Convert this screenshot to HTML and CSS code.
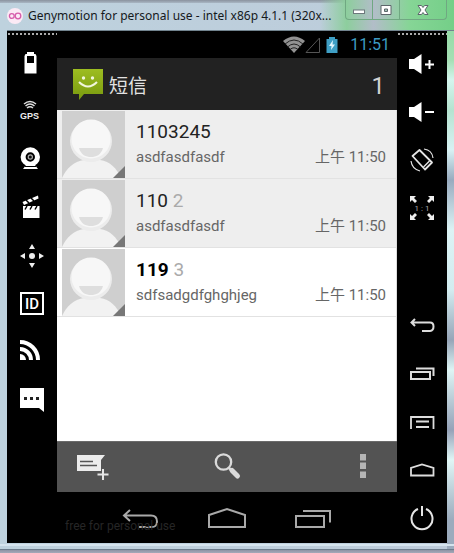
FILE: index.html
```html
<!DOCTYPE html>
<html lang="zh-CN">
<head>
<meta charset="utf-8">
<title>Genymotion for personal use</title>
<link rel="stylesheet" href="styles.css">
</head>
<body>
<svg class="defs" aria-hidden="true">
  <defs>
    <linearGradient id="leaf" x1="0" y1="0" x2="0" y2="1"><stop offset="0" stop-color="#9dbd21"/><stop offset="1" stop-color="#78990f"/></linearGradient>
    <symbol id="avatar" viewBox="0 0 63 67" preserveAspectRatio="none">
      <rect width="63" height="67" fill="#cfcfcf"/>
      <path d="M0 67C4 58 12 50 22 49H38C48 50 55 58 59 67Z" fill="#f2f2f2"/>
      <circle cx="29" cy="30" r="21" fill="#ececec"/>
      <circle cx="29" cy="28" r="19.500" fill="#f7f7f7"/>
      <path d="M17 37H41C39 44 34 46 29 46S19 44 17 37Z" fill="#dedede"/>
      <path d="M63 55V67H51Z" fill="#777"/>
    </symbol>
  </defs>
</svg>
<div class="window">
  <header class="titlebar">
    <svg class="app-icon" viewBox="0 0 16 16" aria-hidden="true"><circle cx="8" cy="8" r="8" fill="#fbeaf5"/><g fill="none" stroke="#d65cab" stroke-width="1.300"><circle cx="4.800" cy="8" r="2.400"/><circle cx="11" cy="8" r="2.800"/></g></svg>
    <h1>Genymotion for personal use - intel x86p 4.1.1 (320x...</h1>
    <div class="controls">
      <button aria-label="Minimize"><svg viewBox="0 0 14 12"><rect x="1.500" y="6" width="11" height="3.500" fill="#fff" stroke="#6d777c"/></svg></button>
      <button aria-label="Maximize"><svg viewBox="0 0 14 12"><path d="M2 1.500H12V10.500H2ZM5.500 5V7.500H8.500V5Z" fill="#fff" fill-rule="evenodd" stroke="#5d666b"/></svg></button>
      <button class="close" aria-label="Close"><svg viewBox="0 0 14 12"><path d="M2 1.500H5.500L7 3.500 8.500 1.500H12L9 6 12 10.500H8.500L7 8.500 5.500 10.500H2L5 6Z" fill="#fff" stroke="#5d666b"/></svg></button>
    </div>
  </header>
  <main class="emulator">
    <nav class="tools" aria-label="Sensors">
      <button aria-label="Battery"><svg viewBox="0 0 32 32"><path d="M11 5H18V7H19.500L20.500 9V26.500H8.500V9L9.500 7H11ZM11 9V16H18V9Z" fill="#fff" fill-rule="evenodd"/></svg></button>
      <button aria-label="GPS"><svg viewBox="0 0 32 32"><g fill="none" stroke="#ddd" stroke-width="1.500"><path d="M8 9Q14 4 20 9M9.500 11Q14 7 18.500 11M11 13Q14 10.500 17 13"/></g><text x="4" y="24" class="gps">GPS</text></svg></button>
      <button aria-label="Camera"><svg viewBox="0 0 32 32"><circle cx="14.300" cy="14" r="7.200" fill="none" stroke="#fff" stroke-width="5"/><circle cx="14.300" cy="14" r="2.700" fill="#aaa"/><circle cx="14.300" cy="14" r="1.500" fill="#111"/><path d="M10 22H19L22 26H7Z" fill="#fff"/><path d="M9 23.500H20" stroke="#000"/></svg></button>
      <button aria-label="Video"><svg viewBox="0 0 32 32"><path d="M7 15H23.500V27H7Z" fill="#fff"/><path d="M6.500 11L22 4.500 22.500 7.500 8 14Z" fill="#fff"/><path d="M10 9L13 12M15 7L18 10M11 15L9 18.500M16 15L14 18.500M21 15L19 18.500" stroke="#000" stroke-width="1.500"/></svg></button>
      <button aria-label="Move"><svg viewBox="0 0 32 32"><circle cx="16" cy="17" r="3" fill="#eee"/><path d="M16 5L19 10H13ZM16 29L19 24H13ZM4 17L9 14V20ZM28 17L23 14V20Z" fill="#eee"/></svg></button>
      <button aria-label="Identifiers"><svg viewBox="0 0 32 32"><rect x="5" y="6" width="22" height="21" fill="none" stroke="#fff" stroke-width="2"/><text x="16" y="22" class="ident">ID</text></svg></button>
      <button aria-label="Network"><svg viewBox="0 0 32 32"><g fill="none" stroke="#fff" stroke-width="4"><path d="M4 7A18 18 0 0 1 22 25M4 14A11 11 0 0 1 15 25"/></g><path d="M4 19A6 6 0 0 1 10 25H4Z" fill="#fff"/></svg></button>
      <button aria-label="Phone"><svg viewBox="0 0 32 32"><path d="M4 5H28V29L23 25H4Z" fill="#fff"/><path d="M8 14H11V17H8ZM14 14H17V17H14ZM20 14H23V17H20Z" fill="#222"/></svg></button>
    </nav>

    <section class="phone">
      <div class="status">
        <svg class="wifi" viewBox="0 0 22 18"><path d="M11 17L0 5Q11 -4 22 5Z" fill="#929292"/><path d="M2 8Q11 0 20 8M4.500 11Q11 5 17.500 11M7 13.500Q11 10 15 13.500" stroke="#222" fill="none"/></svg>
        <svg class="signal" viewBox="0 0 16 18"><path d="M1 16.500H14.500V2Z" fill="none" stroke="#555"/></svg>
        <svg class="charge" viewBox="0 0 12 18"><path d="M3 1H9V3H11.500V17H.5V3H3Z" fill="#3f9fc5"/><path d="M7 4L3 10H5.500L5 14 9 8.500H6.500Z" fill="#e2f7ff"/></svg>
        <time>11:51</time>
      </div>
      <header class="appbar">
        <svg viewBox="0 0 32 32" aria-hidden="true"><path d="M1 1H31V26H12L7 32V26H1Z" fill="url(#leaf)"/><circle cx="11.500" cy="10" r="1.700" fill="#f1f6dc"/><circle cx="20.500" cy="10" r="1.700" fill="#f1f6dc"/><path d="M7 14Q16 23 25 14" fill="none" stroke="#f1f6dc" stroke-width="2"/></svg>
        <h2>短信</h2>
        <span class="unread">1</span>
      </header>
      <ul class="threads">
        <li>
          <svg class="avatar" aria-hidden="true"><use href="#avatar"/></svg>
          <div class="body"><div class="name">1103245</div><div class="line"><span>asdfasdfasdf</span><time>上午 11:50</time></div></div>
        </li>
        <li>
          <svg class="avatar" aria-hidden="true"><use href="#avatar"/></svg>
          <div class="body"><div class="name">110 <span class="count">2</span></div><div class="line"><span>asdfasdfasdf</span><time>上午 11:50</time></div></div>
        </li>
        <li class="new">
          <svg class="avatar" aria-hidden="true"><use href="#avatar"/></svg>
          <div class="body"><div class="name">119 <span class="count">3</span></div><div class="line"><span>sdfsadgdfghghjeg</span><time>上午 11:50</time></div></div>
        </li>
      </ul>
      <div class="actions">
        <button aria-label="New message"><svg viewBox="0 0 32 32"><path d="M0 4H28L24 9V20H0Z" fill="#ececec"/><path d="M3 10.500H16M3 14.500H20" stroke="#555" stroke-width="1.600"/><path d="M26 17V30M19.500 23.500H32" stroke="#555" stroke-width="4"/><path d="M26 18V29M20.500 23.500H31.500" stroke="#e6e6e6" stroke-width="2"/></svg></button>
        <button aria-label="Search"><svg viewBox="0 0 32 32"><circle cx="12.500" cy="11" r="7.700" fill="none" stroke="#dadada" stroke-width="2.300"/><path d="M18 17L21 20" stroke="#dadada" stroke-width="2.500"/><path d="M21 19.500L26.500 25" stroke="#dadada" stroke-width="5" stroke-linecap="round"/></svg></button>
        <button aria-label="More"><svg viewBox="0 0 32 32"><path d="M15 3H21V9.500H15ZM15 11.500H21V18H15ZM15 20.500H21V27H15Z" fill="#b5b5b5"/></svg></button>
      </div>
      <div class="navkeys">
        <button aria-label="Back"><svg viewBox="0 0 40 24"><path d="M9 4L3 9.500 9 15M3 9.500H30Q36 9.500 36 15.500T30 21H18" fill="none" stroke="#a9a9a9" stroke-width="2"/></svg></button>
        <button aria-label="Home"><svg viewBox="0 0 40 24"><path d="M2 21V9L20 3 38 9V21Z" fill="none" stroke="#a9a9a9" stroke-width="2"/></svg></button>
        <button aria-label="Recent apps"><svg viewBox="0 0 40 24"><path d="M3 10H31V21H3ZM10 5H37V16.500" fill="none" stroke="#a9a9a9" stroke-width="2"/></svg></button>
        <span class="watermark">free for personal use</span>
      </div>
    </section>

    <nav class="tools" aria-label="Device">
      <button aria-label="Volume up"><svg viewBox="0 0 32 32"><path d="M3 12H8L15.500 7V27L8 22H3Z" fill="#fff"/><path d="M19 17.500H28M23.500 13V22" stroke="#fff" stroke-width="2"/></svg></button>
      <button aria-label="Volume down"><svg viewBox="0 0 32 32"><path d="M3 12H8L15.500 7V27L8 22H3Z" fill="#fff"/><path d="M19 17H28" stroke="#fff" stroke-width="2"/></svg></button>
      <button aria-label="Rotate"><svg viewBox="0 0 32 32"><g fill="none" stroke="#e5e5e5"><path d="M6.500 13L13.500 7 26 19.500 19 26.500Z" stroke-width="1.800" stroke-linejoin="round"/><path d="M18 6Q26 7 27 15M14 28Q6 26 5 18" stroke-width="1.200"/><path d="M17.500 24L23.500 18" stroke-width="1.500"/></g></svg></button>
      <button aria-label="Pixel perfect"><svg viewBox="0 0 32 32"><path d="M4 5H10L8 7 11 10 9 12 6 9 4 11ZM28 5H22L24 7 21 10 23 12 26 9 28 11ZM4 29H10L8 27 11 24 9 22 6 25 4 23ZM28 29H22L24 27 21 24 23 22 26 25 28 23Z" fill="#eee"/><text x="16" y="20" class="ratio">1 : 1</text></svg></button>
      <button class="lower" aria-label="Back"><svg viewBox="0 0 32 32"><path d="M9 9L5.500 12.500 9 16M5.500 12.500H24Q27.500 12.500 27.500 16.500T24 21H16" fill="none" stroke="#ddd" stroke-width="2"/></svg></button>
      <button aria-label="Recent apps"><svg viewBox="0 0 32 32"><path d="M5 14H24V21H5ZM10 10.500H27.500V18" fill="none" stroke="#ddd" stroke-width="2"/></svg></button>
      <button aria-label="Menu"><svg viewBox="0 0 32 32"><path d="M5 23V11H27.500V23M10 15.500H23M10 21H23" fill="none" stroke="#ddd" stroke-width="1.800"/></svg></button>
      <button aria-label="Home"><svg viewBox="0 0 32 32"><path d="M5 21.500V14L16 10.500 27.500 14V21.500Z" fill="none" stroke="#ddd" stroke-width="1.800"/></svg></button>
      <button aria-label="Power"><svg viewBox="0 0 32 32"><path d="M12 7A10.500 10.500 0 1 0 20 7M16 4V14" fill="none" stroke="#e5e5e5" stroke-width="2"/></svg></button>
    </nav>
  </main>
</div>
</body>
</html>
```
FILE: styles.css
```css
* { box-sizing: border-box; }
body { margin: 0; font-family: Roboto, "Noto Sans CJK SC", sans-serif; background: #b6c6d6; }
button { border: 0; padding: 0; background: none; display: flex; align-items: center; justify-content: center; }
svg { display: block; flex: none; }
h1, h2, ul { margin: 0; padding: 0; font-weight: 400; }
.defs { width: 0; height: 0; position: absolute; }

.window {
  min-height: 100vh;
  display: flex;
  flex-direction: column;
  padding: 0 7px 10px;
  background:
    linear-gradient(#8a929e, #a9b7c4) top / 100% 3px no-repeat,
    linear-gradient(#d5e4ee, #d5e4ee) bottom 7px left / 100% 2px no-repeat,
    linear-gradient(#6c7c8c, #6c7c8c) bottom 3px left / 100% 1px no-repeat,
    linear-gradient(#8e93a4, #a4a9b9) bottom / 100% 3px no-repeat,
    linear-gradient(#86d89a 0, #a5dfb4 60px, #d4f5ee 80px, #b5e3d0 110px, #d8f2f4 150px, #98abbf 180px, #dcf3f5 230px, #d3ecf0 290px, #96a5b8 340px, #def5f5 370px, #95a2b8 430px, #e0f6f6 460px, #9babbd 520px) right / 7px 100% no-repeat,
    linear-gradient(90deg, #bed2de, #bccbda);
}
.titlebar {
  display: flex;
  align-items: flex-start;
  height: 31px;
  margin-right: -7px;
  padding-right: 7px;
  background: linear-gradient(90deg, transparent 70%, #8dce9d 76%, #b2bdc8 82%, #86d596 90%, #74cf88);
  border-bottom: 1px solid #71838e;
}
.app-icon { width: 16px; height: 16px; margin-top: 8px; }
.titlebar h1 {
  flex: 1;
  min-width: 0;
  margin: 6px 0 0 5px;
  font: 12px/20px "Noto Sans", sans-serif;
  color: #15191c;
  white-space: nowrap;
}
.controls {
  display: flex;
  height: 20px;
  border: 1px solid #70a882;
  border-top: 0;
  border-radius: 0 0 4px 4px;
}
.controls button { width: 27px; border-right: 1px solid #70a882; }
.controls .close { width: 46px; border-right: 0; }
.controls svg { width: 14px; height: 12px; }

.emulator { flex: 1; display: grid; grid-template-columns: 50px minmax(0, 1fr) 50px; background: #000; }
.tools {
  display: flex;
  flex-direction: column;
  padding: 8px 1px 1px;
  background: radial-gradient(circle at 1px 1px, #aaa 1px, transparent 1px) 1px 2px / 4px 3px repeat-x;
}
.tools button { height: 48px; }
.tools svg { width: 32px; height: 32px; }
.tools .lower { margin-top: auto; }
.gps { font: bold 9px "Liberation Sans", sans-serif; fill: #eee; }
.ident { font: 500 15px Roboto, sans-serif; fill: #fff; text-anchor: middle; }
.ratio { font: 8px Roboto, sans-serif; fill: #aaa; text-anchor: middle; }

.phone { display: flex; flex-direction: column; }
.status { display: flex; align-items: center; justify-content: flex-end; height: 27px; padding-right: 7px; }
.wifi { width: 22px; height: 18px; }
.signal { width: 16px; height: 18px; }
.charge { width: 12px; height: 18px; margin: 0 12px 0 5px; }
.status time { font-size: 16px; color: #3d9cc2; }

.appbar { display: flex; align-items: center; height: 52px; padding: 0 12px 0 15px; background: #222; color: #e2e2e2; }
.appbar svg { width: 32px; height: 32px; }
.appbar h2 { flex: 1; margin-left: 5px; font-size: 19px; }
.unread { font-size: 24px; line-height: 28px; padding-top: 3px; color: #d2d2d2; }

.threads { flex: 1; list-style: none; background: #fff; border-right: 1px solid #ddd; }
.threads li { display: flex; height: 69px; padding: 1px 10px 0 5px; background: #eee; border-bottom: 1px solid #e2e2e2; }
.threads .new { background: #fff; }
.avatar { width: 63px; height: 67px; }
.body { flex: 1; min-width: 0; margin-left: 11px; padding-top: 8px; }
.name { font-size: 19px; line-height: 26px; color: #222; }
.new .name { font-weight: 700; color: #000; }
.count { color: #aaa; font-weight: 400; }
.line { display: flex; justify-content: space-between; font-size: 15px; line-height: 24px; color: #666; }

.actions { display: flex; align-items: center; justify-content: space-between; height: 51px; padding: 0 20px; background: #535353; border-top: 1px solid #6b6b6b; }
.actions svg { width: 32px; height: 32px; }
.navkeys { position: relative; display: flex; align-items: center; justify-content: center; height: 51px; }
.navkeys button { width: 86px; height: 50px; }
.navkeys svg { width: 40px; height: 24px; }
.watermark { position: absolute; left: 8px; bottom: 9px; font-size: 12px; line-height: 16px; color: #262626; }
```
